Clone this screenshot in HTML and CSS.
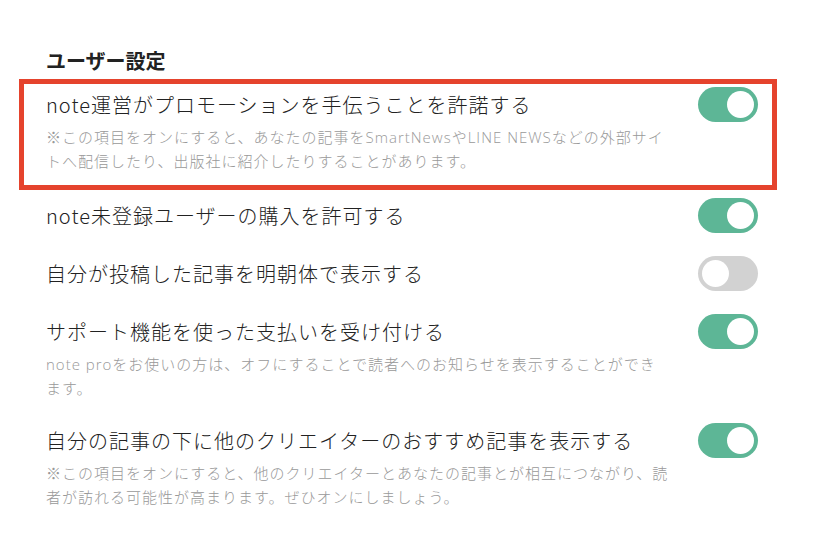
FILE: index.html
```html
<!DOCTYPE html>
<html lang="ja">
<head>
<meta charset="utf-8">
<title>ユーザー設定</title>
<link rel="stylesheet" href="styles.css">
</head>
<body>
<main class="settings">
  <h2 class="settings-title">ユーザー設定</h2>
  <ul class="setting-list">
    <li class="setting is-highlighted">
      <div class="setting-head">
        <span class="setting-label">note運営がプロモーションを手伝うことを許諾する</span>
        <span class="toggle is-on" role="switch" aria-checked="true"><span class="knob"></span></span>
      </div>
      <p class="setting-desc">※この項目をオンにすると、あなたの記事をSmartNewsやLINE NEWSなどの外部サイ<br>トへ配信したり、出版社に紹介したりすることがあります。</p>
    </li>
    <li class="setting">
      <div class="setting-head">
        <span class="setting-label">note未登録ユーザーの購入を許可する</span>
        <span class="toggle is-on" role="switch" aria-checked="true"><span class="knob"></span></span>
      </div>
    </li>
    <li class="setting">
      <div class="setting-head">
        <span class="setting-label">自分が投稿した記事を明朝体で表示する</span>
        <span class="toggle" role="switch" aria-checked="false"><span class="knob"></span></span>
      </div>
    </li>
    <li class="setting">
      <div class="setting-head">
        <span class="setting-label">サポート機能を使った支払いを受け付ける</span>
        <span class="toggle is-on" role="switch" aria-checked="true"><span class="knob"></span></span>
      </div>
      <p class="setting-desc">note proをお使いの方は、オフにすることで読者へのお知らせを表示することができます。</p>
    </li>
    <li class="setting">
      <div class="setting-head">
        <span class="setting-label">自分の記事の下に他のクリエイターのおすすめ記事を表示する</span>
        <span class="toggle is-on" role="switch" aria-checked="true"><span class="knob"></span></span>
      </div>
      <p class="setting-desc">※この項目をオンにすると、他のクリエイターとあなたの記事とが相互につながり、読者が訪れる可能性が高まります。ぜひオンにしましょう。</p>
    </li>
  </ul>
</main>
</body>
</html>
```

FILE: styles.css
```css
html, body {
  margin: 0;
  padding: 0;
  background: #ffffff;
}

body {
  font-family: "Noto Sans CJK JP", "Noto Sans", sans-serif;
  color: #222222;
}

.settings {
  width: 758px;
  padding: 46px 0 0 19px;
}

.settings-title {
  margin: 0 0 3px 0;
  padding-left: 27px;
  font-size: 20px;
  line-height: 30px;
  font-weight: 700;
  color: #222222;
}

.setting-list {
  list-style: none;
  margin: 0;
  padding: 0;
}

.setting {
  border: 5px solid transparent;
  padding: 3px 14px 10px 22px;
}

.setting.is-highlighted {
  border-color: #e5432d;
  padding-bottom: 12px;
}

.setting-head {
  display: flex;
  align-items: center;
  gap: 22px;
}

.setting-label {
  flex: 1;
  font-size: 20px;
  line-height: 30px;
  font-weight: 300;
  letter-spacing: 1px;
  color: #222222;
}

.setting-desc {
  margin: 3px 0 0 0;
  width: 625px;
  font-family: "Open Sans", "Noto Sans CJK JP", sans-serif;
  font-size: 15px;
  line-height: 24px;
  font-weight: 300;
  letter-spacing: 1px;
  color: #999999;
}

.toggle {
  flex: none;
  display: flex;
  align-items: center;
  justify-content: flex-start;
  box-sizing: border-box;
  width: 60px;
  height: 35px;
  padding: 0 4px;
  border-radius: 18px;
  background: #d2d2d2;
}

.toggle.is-on {
  justify-content: flex-end;
  background: #5db696;
}

.knob {
  width: 27px;
  height: 27px;
  border-radius: 50%;
  background: #ffffff;
}
```
